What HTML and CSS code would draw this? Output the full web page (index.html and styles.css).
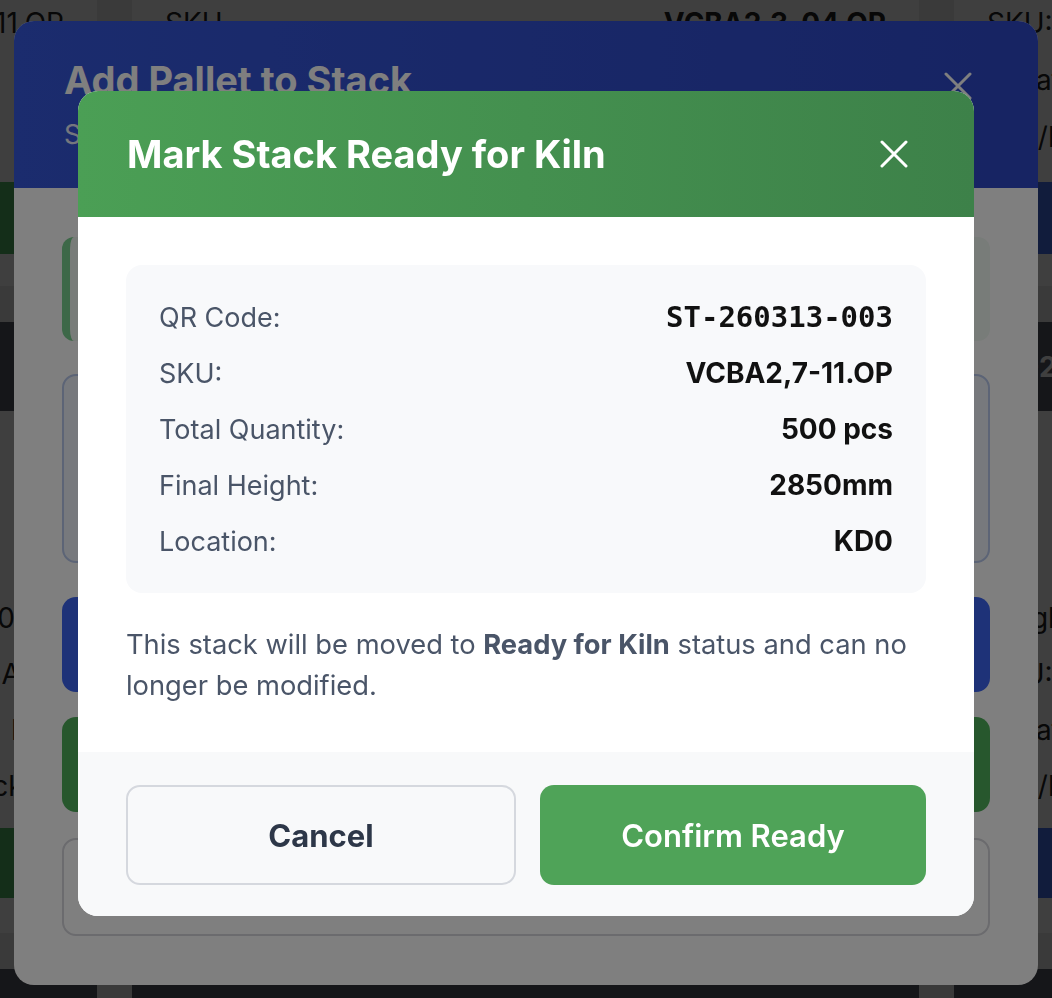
FILE: index.html
```html
<!DOCTYPE html>
<html lang="en">
<head>
    <meta charset="UTF-8">
    <meta name="viewport" content="width=device-width, initial-scale=1.0">
    <title>Stacking</title>
    <link rel="stylesheet" href="styles.css">
</head>
<body>
    <!-- Board of stacks behind the dialogs -->
    <div class="board">
        <div class="column">
            <div class="card">
                <div class="row"><span class="label">SKU:</span><span class="value">VCBA2,3-11.OP</span></div>
                <div class="row"><span class="label">Location:</span><span class="value">- -</span></div>
                <div class="row"><span class="label">Input/Output:</span><span class="value">-</span></div>
                <div class="card-btn green">Add Pallet</div>
            </div>
            <div class="card">
                <div class="card-head">ST-260313-001</div>
                <div class="card-body">
                    <div class="row"><span class="label">Height:</span><span class="value">3130mm</span></div>
                    <div class="row"><span class="label">SKU:</span><span class="value">VCBA4,4</span></div>
                    <div class="row"><span class="label">Location:</span><span class="value strong">KD1</span></div>
                    <div class="row"><span class="label">Status:</span><span class="value">Stacking</span></div>
                    <div class="card-btn green">Add Pallet</div>
                </div>
            </div>
            <div class="card">
                <div class="card-head">ST-260313-004</div>
            </div>
        </div>

        <div class="column">
            <div class="card">
                <div class="row"><span class="label">SKU</span><span class="value strong">VCBA2,3-04.OP</span></div>
                <div class="row"><span class="label">Location:</span><span class="value">KD2</span></div>
                <div class="row"><span class="label">Input/Output:</span><span class="value">4 / 0</span></div>
                <div class="card-btn blue">Add Pallet</div>
            </div>
            <div class="card">
                <div class="card-head">ST-260313-002</div>
                <div class="card-body">
                    <div class="row"><span class="label">Height:</span><span class="value">1900mm</span></div>
                    <div class="row"><span class="label">SKU:</span><span class="value">VCBA2,3-04.OP</span></div>
                    <div class="row"><span class="label">Location:</span><span class="value">KD2</span></div>
                    <div class="row"><span class="label">Input/Output:</span><span class="value">3 / 0</span></div>
                    <div class="card-btn blue">Add Pallet</div>
                </div>
            </div>
            <div class="card">
                <div class="card-head">ST-260313-005</div>
            </div>
        </div>

        <div class="column">
            <div class="card">
                <div class="row"><span class="label">SKU:</span><span class="value">VCBA2,7-11.OP</span></div>
                <div class="row"><span class="label">Location:</span><span class="value">KD0</span></div>
                <div class="row"><span class="label">Slot/Row:</span><span class="value">2 / 0</span></div>
                <div class="card-btn blue">Add Pallet</div>
            </div>
            <div class="card">
                <div class="card-head">ST-260313-003</div>
                <div class="card-body">
                    <div class="row"><span class="label">Height:</span><span class="value">2850mm</span></div>
                    <div class="row"><span class="label">SKU:</span><span class="value">VCBA2,7-11.OP</span></div>
                    <div class="row"><span class="label">Location:</span><span class="value">KD0</span></div>
                    <div class="row"><span class="label">Slot/Row:</span><span class="value">5 / 0</span></div>
                    <div class="card-btn blue">Add Pallet</div>
                </div>
            </div>
            <div class="card">
                <div class="card-head">ST-260313-006</div>
            </div>
        </div>
    </div>

    <!-- First dialog: add pallet -->
    <div class="overlay overlay-base">
        <div class="sheet">
            <div class="sheet-head">
                <div>
                    <h2 class="sheet-title">Add Pallet to Stack</h2>
                    <p class="sheet-sub">Stack ST-260313-003 &middot; VCBA2,7-11.OP</p>
                </div>
                <button class="close-btn" aria-label="Close">
                    <svg width="28" height="28" viewBox="0 0 28 28"><path d="M2 2 L26 26 M26 2 L2 26" stroke="currentColor" stroke-width="3" stroke-linecap="round" fill="none"/></svg>
                </button>
            </div>
            <div class="sheet-body">
                <div class="notice"></div>
                <div class="scan-box"></div>
                <div class="big-btn blue">Scan Pallet</div>
                <div class="big-btn green">Mark Ready for Kiln</div>
                <div class="outline-btn">Close</div>
            </div>
        </div>
    </div>

    <!-- Second dialog: confirm ready -->
    <div class="overlay overlay-top">
        <div class="dialog">
            <div class="dialog-head">
                <h2 class="dialog-title">Mark Stack Ready for Kiln</h2>
                <button class="close-btn" aria-label="Close">
                    <svg width="28" height="28" viewBox="0 0 28 28"><path d="M2 2 L26 26 M26 2 L2 26" stroke="currentColor" stroke-width="3" stroke-linecap="round" fill="none"/></svg>
                </button>
            </div>
            <div class="dialog-body">
                <div class="summary">
                    <div class="summary-row"><span>QR Code:</span><span class="mono">ST-260313-003</span></div>
                    <div class="summary-row"><span>SKU:</span><b>VCBA2,7-11.OP</b></div>
                    <div class="summary-row"><span>Total Quantity:</span><b>500 pcs</b></div>
                    <div class="summary-row"><span>Final Height:</span><b>2850mm</b></div>
                    <div class="summary-row"><span>Location:</span><b>KD0</b></div>
                </div>
                <p class="note">This stack will be moved to <strong>Ready for Kiln</strong> status and can no longer be modified.</p>
            </div>
            <div class="dialog-foot">
                <button class="btn btn-cancel">Cancel</button>
                <button class="btn btn-confirm">Confirm Ready</button>
            </div>
        </div>
    </div>
</body>
</html>
```

FILE: styles.css
```css
body {
    margin: 0;
    font-family: Inter, "Noto Sans", sans-serif;
    background-color: #ebebeb;
    overflow: hidden;
}

button {
    font-family: inherit;
    cursor: pointer;
}

/* ---- board behind the dialogs ---- */

.board {
    display: grid;
    grid-template-columns: 787px 787px 787px;
    column-gap: 35px;
    margin-left: -690px;
    margin-top: -35px;
}

.column {
    display: flex;
    flex-direction: column;
    gap: 36px;
}

.card {
    background-color: #ffffff;
    padding: 29px 33px 32px;
    color: #222222;
}

.card:has(.card-head) {
    padding: 0;
}

.card-head {
    height: 89px;
    display: flex;
    align-items: center;
    padding: 0 37px;
    background-color: #565864;
    color: #ffffff;
    font-size: 28px;
    font-weight: 700;
}

.card-body {
    padding: 179px 33px 35px;
}

.row {
    height: 57px;
    display: flex;
    align-items: center;
    justify-content: space-between;
    font-size: 28px;
}

.card-body .row {
    height: 56px;
}

.value.strong {
    font-weight: 700;
}

.card-btn {
    margin-top: 17px;
    height: 72px;
    border-radius: 14px;
    display: flex;
    align-items: center;
    justify-content: center;
    color: #ffffff;
    font-size: 28px;
    font-weight: 600;
}

.card-body .card-btn {
    margin-top: 14px;
    height: 70px;
}

.card-btn.green {
    background-color: #52b866;
}

.card-btn.blue {
    background-color: #4470f0;
}

/* ---- overlays ---- */

.overlay {
    position: fixed;
    inset: 0;
    background-color: rgba(0, 0, 0, 0.5);
    display: flex;
    justify-content: center;
    align-items: flex-start;
}

.overlay-base {
    padding-top: 21px;
}

.overlay-top {
    padding-top: 91px;
}

.close-btn {
    width: 56px;
    height: 56px;
    border: none;
    background: none;
    color: #ffffff;
    display: flex;
    align-items: center;
    justify-content: center;
    padding: 0;
    flex-shrink: 0;
}

/* ---- add pallet sheet ---- */

.sheet {
    width: 1024px;
    height: 964px;
    background-color: #ffffff;
    border-radius: 20px;
    overflow: hidden;
}

.sheet-head {
    height: 167px;
    box-sizing: border-box;
    padding: 36px 52px 0 50px;
    display: flex;
    justify-content: space-between;
    align-items: flex-start;
    background: linear-gradient(90deg, #3658dc, #2e48c6);
    color: #ffffff;
}

.sheet-title {
    margin: 0;
    font-size: 38px;
    line-height: 46px;
    font-weight: 700;
}

.sheet-sub {
    margin: 13px 0 0;
    font-size: 27px;
    line-height: 38px;
    opacity: 0.9;
}

.sheet-head .close-btn {
    margin-top: 1px;
}

.sheet-body {
    padding: 49px 48px;
    display: flex;
    flex-direction: column;
}

.notice {
    height: 104px;
    border-radius: 12px;
    border-left: 8px solid #7bd090;
    background-color: #f1f8f2;
}

.scan-box {
    margin-top: 33px;
    height: 185px;
    border: 2px solid #b8c8ec;
    border-radius: 14px;
    background-color: #eef3fb;
}

.big-btn {
    height: 95px;
    border-radius: 14px;
    display: flex;
    align-items: center;
    justify-content: center;
    color: #ffffff;
    font-size: 30px;
    font-weight: 600;
}

.big-btn.blue {
    margin-top: 34px;
    background-color: #3c64f0;
}

.big-btn.green {
    margin-top: 25px;
    background-color: #4eae5a;
}

.outline-btn {
    margin-top: 26px;
    height: 94px;
    border: 2px solid #d6d6dc;
    border-radius: 14px;
    display: flex;
    align-items: center;
    justify-content: center;
    color: #2d3748;
    font-size: 30px;
    font-weight: 600;
}

/* ---- confirm dialog ---- */

.dialog {
    width: 896px;
    background-color: #ffffff;
    border-radius: 20px;
    overflow: hidden;
}

.dialog-head {
    height: 126px;
    box-sizing: border-box;
    padding: 0 52px 0 49px;
    display: flex;
    align-items: center;
    justify-content: space-between;
    background: linear-gradient(90deg, #4b9f55, #3d8149);
    color: #ffffff;
}

.dialog-title {
    margin: 0;
    font-size: 38px;
    font-weight: 700;
}

.dialog-body {
    padding: 48px 48px 46px;
}

.summary {
    background-color: #f8f9fb;
    border-radius: 16px;
    padding: 24px 33px;
}

.summary-row {
    height: 56px;
    display: flex;
    align-items: center;
    justify-content: space-between;
    font-size: 27px;
    color: #4a5568;
}

.summary-row b {
    color: #111111;
    font-size: 28px;
    font-weight: 700;
}

.summary-row .mono {
    font-family: "DejaVu Sans Mono", "Liberation Mono", monospace;
    font-weight: 700;
    color: #111111;
    font-size: 29px;
}

.note {
    margin: 31px 0 0;
    font-size: 27.3px;
    line-height: 41px;
    color: #4a5568;
}

.note strong {
    font-weight: 700;
}

.dialog-foot {
    background-color: #f8f9fa;
    padding: 33px 48px 31px;
    display: flex;
    gap: 24px;
}

.btn {
    flex: 1;
    height: 100px;
    border-radius: 14px;
    font-size: 31px;
}

.btn-cancel {
    border: 2px solid #d5d8de;
    background-color: #f8f9fa;
    color: #2d3748;
    font-weight: 700;
}

.btn-confirm {
    border: none;
    background-color: #4fa358;
    color: #ffffff;
    font-weight: 600;
}
```
